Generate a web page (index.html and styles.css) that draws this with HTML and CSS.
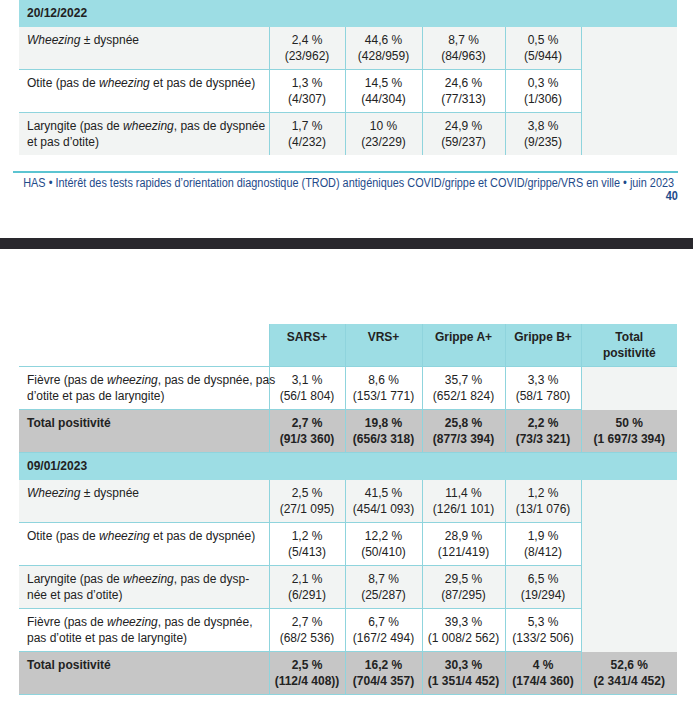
FILE: index.html
```html
<!DOCTYPE html>
<html lang="fr">
<head>
<meta charset="utf-8">
<title>HAS – TROD</title>
<link rel="stylesheet" href="styles.css">
</head>
<body>
<div class="page page-one">
  <table class="data">
    <colgroup>
      <col class="c-label"><col class="c-sars"><col class="c-vrs"><col class="c-ga"><col class="c-gb"><col class="c-tot">
    </colgroup>
    <tbody>
      <tr class="date-row"><td colspan="6">20/12/2022</td></tr>
      <tr class="shade">
        <td class="label"><em>Wheezing</em> ± dyspnée</td>
        <td>2,4 %<br>(23/962)</td>
        <td>44,6 %<br>(428/959)</td>
        <td>8,7 %<br>(84/963)</td>
        <td>0,5 %<br>(5/944)</td>
        <td class="blank" rowspan="3"></td>
      </tr>
      <tr>
        <td class="label">Otite (pas de <em>wheezing</em> et pas de dyspnée)</td>
        <td>1,3 %<br>(4/307)</td>
        <td>14,5 %<br>(44/304)</td>
        <td>24,6 %<br>(77/313)</td>
        <td>0,3 %<br>(1/306)</td>
      </tr>
      <tr class="shade last">
        <td class="label">Laryngite (pas de <em>wheezing</em>, pas de dyspnée<br>et pas d’otite)</td>
        <td>1,7 %<br>(4/232)</td>
        <td>10 %<br>(23/229)</td>
        <td>24,9 %<br>(59/237)</td>
        <td>3,8 %<br>(9/235)</td>
      </tr>
    </tbody>
  </table>

  <footer class="page-footer">
    <p class="footer-title"><span class="footer-text">HAS • Intérêt des tests rapides d’orientation diagnostique (TROD) antigéniques COVID/grippe et COVID/grippe/VRS en ville • juin 2023</span></p>
    <p class="footer-num"><span class="footer-text">40</span></p>
  </footer>
</div>

<div class="page-break"></div>

<div class="page page-two">
  <table class="data">
    <colgroup>
      <col class="c-label"><col class="c-sars"><col class="c-vrs"><col class="c-ga"><col class="c-gb"><col class="c-tot">
    </colgroup>
    <thead>
      <tr class="head-row">
        <th class="corner"></th>
        <th>SARS+</th>
        <th>VRS+</th>
        <th>Grippe A+</th>
        <th>Grippe B+</th>
        <th>Total<br>positivité</th>
      </tr>
    </thead>
    <tbody>
      <tr>
        <td class="label">Fièvre (pas de <em>wheezing</em>, pas de dyspnée, pas<br>d’otite et pas de laryngite)</td>
        <td>3,1 %<br>(56/1 804)</td>
        <td>8,6 %<br>(153/1 771)</td>
        <td>35,7 %<br>(652/1 824)</td>
        <td>3,3 %<br>(58/1 780)</td>
        <td class="blank"></td>
      </tr>
      <tr class="total">
        <td class="label">Total positivité</td>
        <td>2,7 %<br>(91/3 360)</td>
        <td>19,8 %<br>(656/3 318)</td>
        <td>25,8 %<br>(877/3 394)</td>
        <td>2,2 %<br>(73/3 321)</td>
        <td>50 %<br>(1 697/3 394)</td>
      </tr>
      <tr class="date-row"><td colspan="6">09/01/2023</td></tr>
      <tr class="shade">
        <td class="label"><em>Wheezing</em> ± dyspnée</td>
        <td>2,5 %<br>(27/1 095)</td>
        <td>41,5 %<br>(454/1 093)</td>
        <td>11,4 %<br>(126/1 101)</td>
        <td>1,2 %<br>(13/1 076)</td>
        <td class="blank" rowspan="4"></td>
      </tr>
      <tr>
        <td class="label">Otite (pas de <em>wheezing</em> et pas de dyspnée)</td>
        <td>1,2 %<br>(5/413)</td>
        <td>12,2 %<br>(50/410)</td>
        <td>28,9 %<br>(121/419)</td>
        <td>1,9 %<br>(8/412)</td>
      </tr>
      <tr class="shade">
        <td class="label">Laryngite (pas de <em>wheezing</em>, pas de dysp-<br>née et pas d’otite)</td>
        <td>2,1 %<br>(6/291)</td>
        <td>8,7 %<br>(25/287)</td>
        <td>29,5 %<br>(87/295)</td>
        <td>6,5 %<br>(19/294)</td>
      </tr>
      <tr>
        <td class="label">Fièvre (pas de <em>wheezing</em>, pas de dyspnée,<br>pas d’otite et pas de laryngite)</td>
        <td>2,7 %<br>(68/2 536)</td>
        <td>6,7 %<br>(167/2 494)</td>
        <td>39,3 %<br>(1 008/2 562)</td>
        <td>5,3 %<br>(133/2 506)</td>
      </tr>
      <tr class="total">
        <td class="label">Total positivité</td>
        <td>2,5 %<br>(112/4 408))</td>
        <td>16,2 %<br>(704/4 357)</td>
        <td>30,3 %<br>(1 351/4 452)</td>
        <td>4 %<br>(174/4 360)</td>
        <td>52,6 %<br>(2 341/4 452)</td>
      </tr>
    </tbody>
  </table>
</div>
</body>
</html>
```

FILE: styles.css
```css
html, body {
  margin: 0;
  padding: 0;
  background: #ffffff;
}

body {
  font-family: "Liberation Sans", Arial, sans-serif;
  font-size: 12px;
  color: #222222;
}

.data {
  border-collapse: collapse;
  table-layout: fixed;
  width: 658px;
  margin-left: 19px;
}

.c-label { width: 250px; }
.c-sars  { width: 76px; }
.c-vrs   { width: 77px; }
.c-ga    { width: 83px; }
.c-gb    { width: 76px; }
.c-tot   { width: 96px; }

.data td,
.data th {
  padding: 5px 4px;
  line-height: 16px;
  text-align: center;
  vertical-align: top;
  border-right: 1px solid #8fd4dd;
  border-bottom: 1px solid #8fd4dd;
  white-space: nowrap;
  background: #ffffff;
}

.data td.label {
  text-align: left;
  padding-left: 8px;
  padding-right: 6px;
}

.data em {
  font-style: italic;
}

.data tr.shade td {
  background: #f2f4f3;
}

.data td.blank {
  background: #f2f4f3;
  border-right: none;
  border-bottom: none;
}

.data tr.date-row td {
  background: #9ddde4;
  text-align: left;
  font-weight: bold;
  padding-left: 8px;
  border-right: none;
  border-bottom: 1px solid #9ddde4;
}

.data tr.last td {
  border-bottom: none;
}

.data .head-row th {
  background: #9ddde4;
  font-weight: bold;
}

.data .head-row th:last-child {
  border-right: none;
}

.data .head-row th.corner {
  background: #ffffff;
}

.data tr.total td {
  background: #c6c6c6;
  font-weight: bold;
}

.data tr.total td:last-child {
  border-right: none;
}

.page-footer {
  margin: 16px 15px 0 13px;
  border-top: 2px solid #5bc4d1;
  padding-top: 4px;
  color: #1e4a8a;
  overflow: hidden;
}

.footer-title,
.footer-num {
  display: flex;
  justify-content: flex-end;
  margin: 0;
  font-size: 12.5px;
  line-height: 13px;
  white-space: nowrap;
}

.footer-title {
  margin-right: 4px;
}

.footer-num {
  font-weight: bold;
}

.footer-text {
  flex: none;
  transform: scaleX(0.87);
  transform-origin: right center;
}

.page-break {
  margin-top: 35px;
  height: 11px;
  background: #29282d;
}

.page-two .data {
  margin-top: 75px;
}
```
